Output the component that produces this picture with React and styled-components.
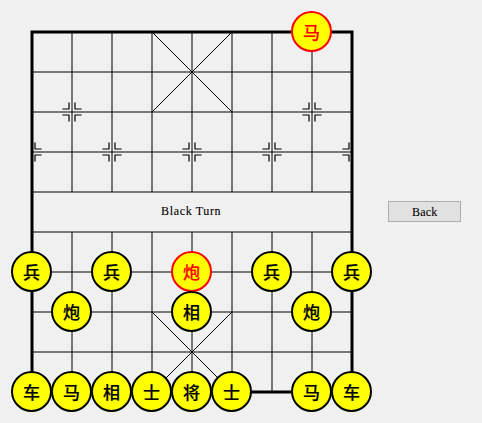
import React from "react";
import styled, { createGlobalStyle } from "styled-components";

const GlobalStyle = createGlobalStyle`
  body {
    margin: 0;
    background: #f0f0f0;
    overflow: hidden;
  }
`;

const Window = styled.main`
  display: flex;
  width: 482px;
  height: 423px;
  background: #f0f0f0;
  color: #000;
`;

const Board = styled.section`
  position: relative;
  flex: none;
  width: 388px;
  height: 423px;
`;

const BoardLines = styled.svg`
  display: block;
  fill: none;
  stroke: #000;
`;

const TurnLabel = styled.div`
  position: absolute;
  left: 161px;
  top: 204px;
  font: 12px/15px "Liberation Serif", serif;
  letter-spacing: 0.66px;
  white-space: nowrap;
  -webkit-text-stroke: 0.1px #000;
`;

const Piece = styled.div`
  position: absolute;
  left: ${(p) => p.$col * 40 + 11}px;
  top: ${(p) => p.$row * 40 + 11}px;
  box-sizing: border-box;
  width: 41px;
  height: 41px;
  display: flex;
  align-items: center;
  justify-content: center;
  padding-bottom: 1px;
  border: 2px solid;
  border-radius: 50%;
  background: #ff0;
  color: ${(p) => (p.$red ? "#f00" : "#000")};
  font: 500 17px/17px "Noto Sans CJK SC", sans-serif;
  -webkit-text-stroke: 0.2px currentColor;
`;

const SidePanel = styled.aside`
  flex: none;
  padding-top: 201px;
`;

const Button = styled.button`
  display: block;
  box-sizing: border-box;
  width: 73px;
  height: 21px;
  padding: 1px 0 0 23px;
  border: 1px solid #adadad;
  background: #e1e1e1;
  color: #000;
  text-align: left;
  font: 12px/18px "Liberation Serif", serif;
  letter-spacing: 0.2px;
  -webkit-text-stroke: 0.1px #000;
`;

const at = (n) => 32 + n * 40;
const range = (from, to) =>
  Array.from({ length: to - from + 1 }, (_, i) => from + i);

const rowLines = range(1, 8).map((r) => `M32 ${at(r)}H352`).join("");
const columnLines = range(1, 7)
  .map((c) => `M${at(c)} 32V192M${at(c)} 232V392`)
  .join("");
const palaces = "M152 32L232 112M232 32L152 112M152 312L232 392M232 312L152 392";

const marks = [
  [1, 2], [7, 2], [0, 3], [2, 3], [4, 3], [6, 3], [8, 3],
];

const markPath = ([c, r]) => {
  const sides = [-1, 1].filter((s) => !(c === 0 && s < 0) && !(c === 8 && s > 0));
  return sides
    .flatMap((sx) =>
      [-1, 1].map(
        (sy) =>
          `M${at(c) + sx * 9} ${at(r) + sy * 3}H${at(c) + sx * 3}V${at(r) + sy * 9}`
      )
    )
    .join("");
};

const pieces = [
  ["马", 7, 0, true],
  ["兵", 0, 6], ["兵", 2, 6], ["炮", 4, 6, true], ["兵", 6, 6], ["兵", 8, 6],
  ["炮", 1, 7], ["相", 4, 7], ["炮", 7, 7],
  ["车", 0, 9], ["马", 1, 9], ["相", 2, 9], ["士", 3, 9],
  ["将", 4, 9], ["士", 5, 9], ["马", 7, 9], ["车", 8, 9],
];

export default function App() {
  return (
    <>
      <GlobalStyle />
      <Window>
        <Board>
          <BoardLines width="388" height="423">
            <path d={rowLines + columnLines} />
            <path d={palaces} />
            <path d={marks.map(markPath).join("")} strokeWidth="1.2" strokeLinecap="square" />
            <rect x="32" y="32" width="320" height="360" strokeWidth="3" />
          </BoardLines>
          <TurnLabel>Black Turn</TurnLabel>
          {pieces.map(([name, col, row, red]) => (
            <Piece key={`${col}-${row}`} $col={col} $row={row} $red={red}>
              {name}
            </Piece>
          ))}
        </Board>
        <SidePanel>
          <Button type="button">Back</Button>
        </SidePanel>
      </Window>
    </>
  );
}
